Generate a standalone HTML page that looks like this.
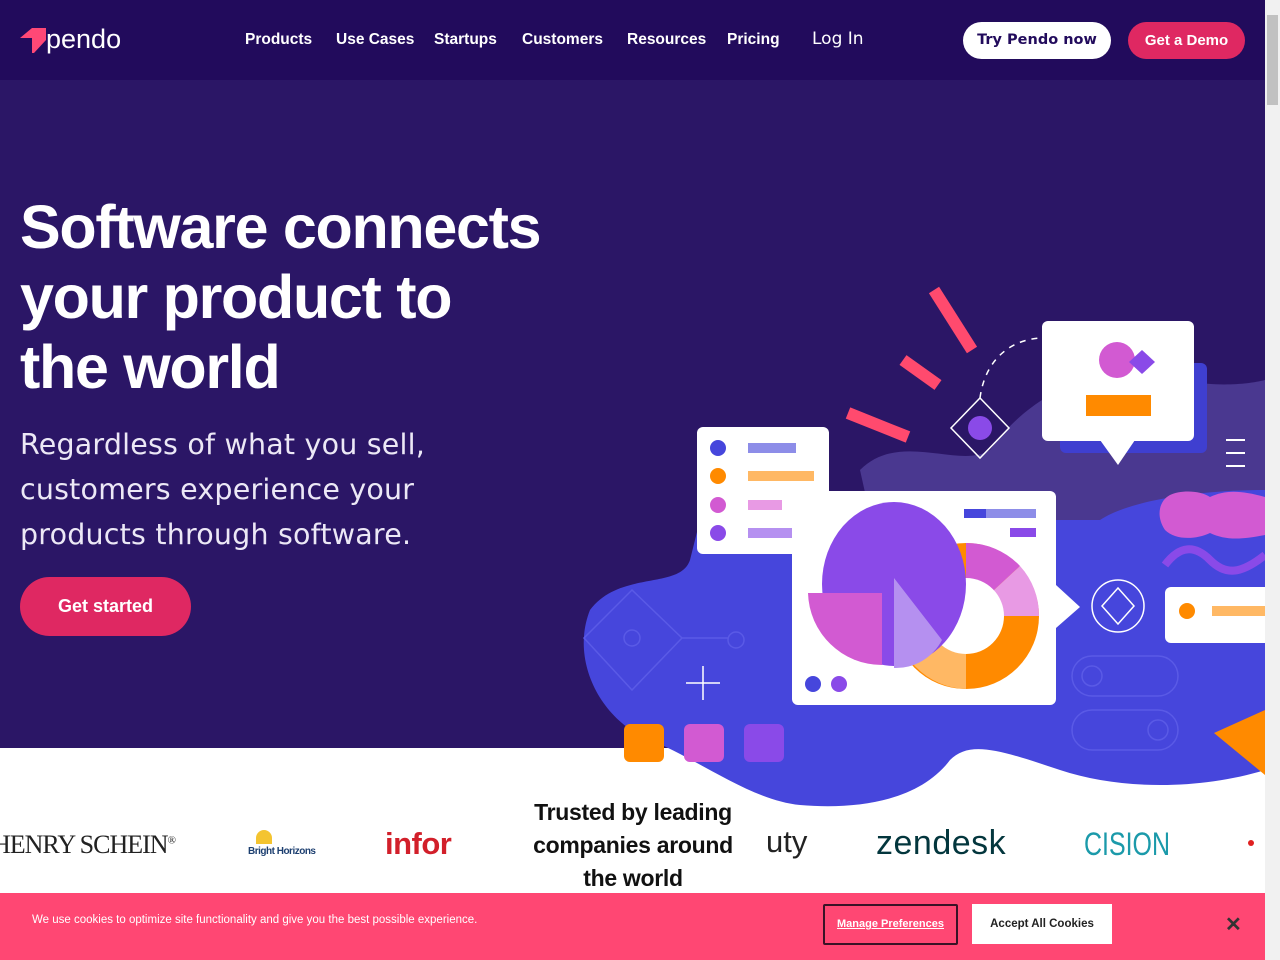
<!DOCTYPE html>
<html><head><meta charset="utf-8"><style>
*{margin:0;padding:0;box-sizing:border-box}
body{width:1280px;height:960px;overflow:hidden;background:#fff;font-family:"Liberation Sans",sans-serif;position:relative}
.nav{position:absolute;left:0;top:0;width:1265px;height:80px;background:#220b5c}
.hero{position:absolute;left:0;top:80px;width:1265px;height:668px;background:#2b1666}
.a{position:absolute}
.nl{position:absolute;top:31px;color:#fff;font-weight:bold;font-size:15.5px;letter-spacing:0px}
h1{position:absolute;left:20px;top:192px;color:#fff;font-size:61px;line-height:70px;font-weight:bold;letter-spacing:-1.3px}
.sub{position:absolute;left:20px;top:422px;color:#ece8f6;font-family:"DejaVu Sans",sans-serif;font-size:28.5px;line-height:45px;letter-spacing:0.2px}
.btn{position:absolute;border-radius:20px;font-weight:bold;font-size:15px;text-align:center}
.sb{position:absolute;right:0;top:0;width:15px;height:960px;background:#f1f1f1}
.cookie{position:absolute;left:0;top:893px;width:1265px;height:67px;background:#ff4773}
</style></head><body>
<div class="nav"></div>
<div class="hero"></div>
<svg class="a" style="left:20px;top:28px" width="26" height="26" viewBox="0 0 26 26"><path d="M0 10 L12 0 L26 0 L26 12 L14 25 L12 25 L12 10 Z" fill="#ff4876"/></svg>
<div class="a" style="left:46px;top:24px;color:#fff;font-size:27px;letter-spacing:0px">pendo</div>
<div class="nl" style="left:245px">Products</div>
<div class="nl" style="left:336px">Use Cases</div>
<div class="nl" style="left:434px">Startups</div>
<div class="nl" style="left:522px">Customers</div>
<div class="nl" style="left:627px">Resources</div>
<div class="nl" style="left:727px">Pricing</div>
<div class="a" style="left:812px;top:29px;color:#fff;font-size:17px;font-family:'DejaVu Sans',sans-serif">Log In</div>
<div class="btn" style="left:963px;top:22px;width:148px;height:37px;line-height:37px;background:#fff;color:#220b5c;font-family:'DejaVu Sans',sans-serif;font-size:14.5px">Try Pendo now</div>
<div class="btn" style="left:1128px;top:22px;width:117px;height:37px;line-height:37px;background:#df2862;color:#fff">Get a Demo</div>

<h1>Software connects<br>your product to<br>the world</h1>
<div class="sub">Regardless of what you sell,<br>customers experience your<br>products through software.</div>
<div class="btn" style="left:20px;top:577px;width:171px;height:59px;line-height:59px;border-radius:30px;background:#df2862;color:#fff;font-size:18px">Get started</div>

<svg class="a" style="left:580px;top:280px" width="685" height="530" viewBox="580 280 685 530">
<path d="M860 470 C900 430 960 470 990 450 C1040 380 1120 360 1180 380 C1230 390 1265 380 1265 380 L1265 560 L880 560 Z" fill="#4a3890"/>
<path d="M590 610 C620 570 680 590 690 560 L700 520 L1100 520 C1130 500 1200 490 1265 490 L1265 770 C1200 790 1120 790 1060 770 C1000 750 970 740 950 760 C920 800 860 810 800 805 C750 800 700 760 650 740 C600 720 570 660 590 610 Z" fill="#4646dc"/>
<g stroke="#5a5ae6" stroke-width="1.5" fill="none">
<path d="M632 590 L682 638 L632 690 L584 638 Z"/><circle cx="632" cy="638" r="8"/><path d="M682 638 L728 638"/><circle cx="736" cy="640" r="8"/>
<rect x="1072" y="656" width="106" height="40" rx="20"/><circle cx="1092" cy="676" r="10"/>
<rect x="1072" y="710" width="106" height="40" rx="20"/><circle cx="1158" cy="730" r="10"/>
</g>
<path d="M686 683 H720 M703 666 V700" stroke="#fff" stroke-width="1.5"/>
<rect x="624" y="724" width="40" height="38" rx="6" fill="#ff8a00"/>
<rect x="684" y="724" width="40" height="38" rx="6" fill="#d25ad2"/>
<rect x="744" y="724" width="40" height="38" rx="6" fill="#8a4ae8"/>
<g stroke="#ff4a6e" stroke-width="12"><path d="M934 290 L972 350"/><path d="M903 360 L938 385"/><path d="M848 413 L908 437"/></g>
<path d="M980 398 C985 360 1010 340 1040 338" stroke="#fff" stroke-width="1.5" fill="none" stroke-dasharray="6 6"/>
<path d="M980 398 L1009 428 L980 458 L951 428 Z" stroke="#fff" stroke-width="1.5" fill="none"/><circle cx="980" cy="428" r="12" fill="#8a4ae8"/>
<rect x="1060" y="363" width="147" height="90" rx="6" fill="#3f3fd0"/>
<rect x="1042" y="321" width="152" height="120" rx="6" fill="#fff"/>
<path d="M1100 440 L1118 465 L1135 440 Z" fill="#fff"/>
<circle cx="1117" cy="360" r="18" fill="#d25ad2"/><path d="M1142 350 L1155 362 L1142 374 L1129 362 Z" fill="#8a4ae8"/>
<rect x="1086" y="395" width="65" height="21" fill="#ff8a00"/>
<path d="M1226 440 H1245 M1226 453 H1245 M1226 466 H1245" stroke="#fff" stroke-width="2"/>
<path d="M1170 495 C1180 490 1200 490 1210 497 C1225 490 1240 490 1265 497 L1265 535 C1240 540 1225 540 1210 533 C1195 540 1175 540 1165 530 C1155 515 1160 500 1170 495 Z" fill="#d25ad2"/>
<path d="M1165 565 C1180 545 1195 545 1210 560 C1225 575 1240 575 1265 555" stroke="#8a4ae8" stroke-width="8" fill="none"/>
<rect x="697" y="427" width="132" height="127" rx="6" fill="#fff"/>
<circle cx="718" cy="448" r="8" fill="#4646dc"/><rect x="748" y="443" width="48" height="10" fill="#8d8de8"/>
<circle cx="718" cy="476" r="8" fill="#ff8a00"/><rect x="748" y="471" width="66" height="10" fill="#ffb864"/>
<circle cx="718" cy="505" r="8" fill="#d25ad2"/><rect x="748" y="500" width="34" height="10" fill="#e89ae4"/>
<circle cx="718" cy="533" r="8" fill="#8a4ae8"/><rect x="748" y="528" width="50" height="10" fill="#b590f0"/>
<rect x="792" y="491" width="264" height="214" rx="6" fill="#fff"/>
<path d="M1056 585 L1080 607 L1056 628 Z" fill="#fff"/>
<rect x="964" y="509" width="72" height="9" fill="#8d8de8"/><rect x="964" y="509" width="22" height="9" fill="#4646dc"/>
<rect x="1010" y="528" width="26" height="9" fill="#8a4ae8"/>
<circle cx="966" cy="616" r="73" fill="#ff8a00"/>
<path d="M966 616 L966 543 A73 73 0 0 1 1020 566 Z" fill="#d25ad2"/>
<path d="M966 616 L1020 566 A73 73 0 0 1 1039 616 Z" fill="#e89ae4"/>
<path d="M966 616 L966 689 A73 73 0 0 1 895 616 Z" fill="#ffb864"/>
<circle cx="966" cy="616" r="38" fill="#fff"/>
<ellipse cx="894" cy="584" rx="72" ry="82" fill="#8a4ae8"/>
<path d="M808 593 L882 593 L882 665 A74 74 0 0 1 808 593 Z" fill="#d25ad2"/>
<path d="M894 578 L942 640 A52 52 0 0 1 894 668 Z" fill="#b590f0"/>
<circle cx="813" cy="684" r="8" fill="#4646dc"/><circle cx="839" cy="684" r="8" fill="#8a4ae8"/>
<circle cx="1118" cy="606" r="26" stroke="#fff" stroke-width="1.5" fill="none"/>
<path d="M1118 588 L1134 606 L1118 624 L1102 606 Z" stroke="#fff" stroke-width="1.5" fill="none"/>
<rect x="1165" y="587" width="110" height="56" rx="6" fill="#fff"/>
<circle cx="1187" cy="611" r="8" fill="#ff8a00"/><rect x="1212" y="606" width="60" height="10" fill="#ffb864"/>
<path d="M1214 733 L1265 710 L1265 775 Z" fill="#ff8a00"/>
</svg>

<div class="a" style="left:-8px;top:830px;font-family:'Liberation Serif',serif;font-size:26px;color:#222;letter-spacing:-1px">HENRY SCHEIN<sup style="font-size:11px">®</sup></div>
<div class="a" style="left:248px;top:846px;font-size:10px;color:#1d3f70;font-weight:bold;letter-spacing:-0.5px">Bright Horizons</div>
<div class="a" style="left:256px;top:830px;width:16px;height:14px;border-radius:8px 8px 0 0;background:#f4c430"></div>
<div class="a" style="left:385px;top:826px;font-size:31px;color:#d21f2a;font-weight:bold;letter-spacing:-0.5px">infor</div>
<div class="a" style="left:516px;top:796px;width:234px;text-align:center;font-size:23px;line-height:33px;font-weight:bold;color:#111;letter-spacing:-0.3px">Trusted by leading companies around the world</div>
<div class="a" style="left:766px;top:824px;font-size:31px;color:#222">uty</div>
<div class="a" style="left:876px;top:824px;font-size:34px;color:#03363d;letter-spacing:0.5px">zendesk</div>
<div class="a" style="left:1084px;top:826px;font-size:32px;color:#1b9aaa;letter-spacing:0px;transform:scaleX(0.78);transform-origin:left">CISION</div>
<div class="a" style="left:1248px;top:840px;width:6px;height:6px;border-radius:3px;background:#e02020"></div>

<div class="cookie"></div>
<div class="a" style="left:32px;top:914px;font-size:11.5px;color:#fff">We use cookies to optimize site functionality and give you the best possible experience.</div>
<div class="a" style="left:823px;top:904px;width:135px;height:41px;border:2px solid #3a1226;border-radius:2px;color:#fff;font-size:11px;font-weight:bold;text-decoration:underline;line-height:37px;text-align:center">Manage Preferences</div>
<div class="a" style="left:972px;top:904px;width:140px;height:40px;background:#fff;color:#222;font-size:11.5px;font-weight:bold;line-height:40px;text-align:center">Accept All Cookies</div>
<div class="a" style="left:1225px;top:912px;font-size:20px;color:#333;font-weight:bold">✕</div>
<div class="sb"><div style="position:absolute;left:2px;top:15px;width:11px;height:90px;background:#c1c1c1"></div></div>
</body></html>
